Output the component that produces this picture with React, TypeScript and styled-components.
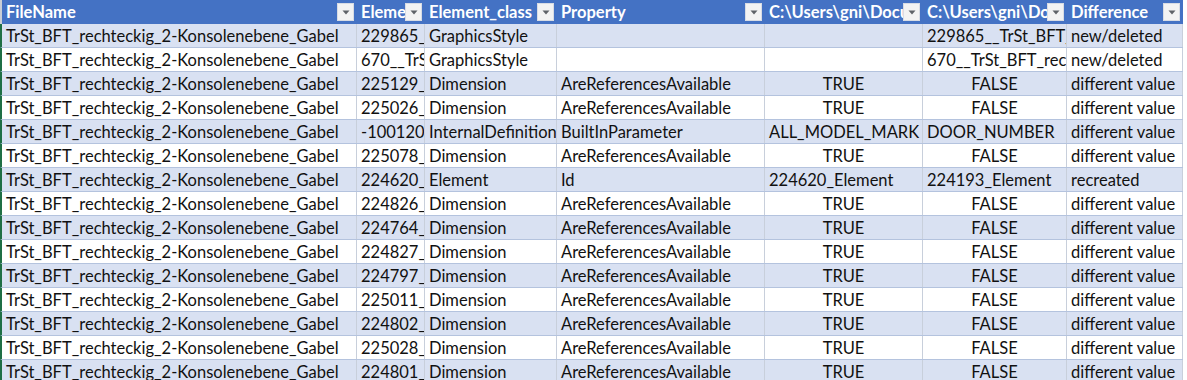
import React from "react"
import styled, { createGlobalStyle } from "styled-components"

const Global = createGlobalStyle`
  html, body { margin: 0; padding: 0; background: #ffffff; }
  body { font-family: Lato, "Open Sans", "Liberation Sans", sans-serif; overflow: hidden; }
`

const COLS = "355px 68px 132px 208px 158px 144px 116px"

const Sheet = styled.div`
  width: 1183px;
  display: flex;
  flex-direction: column;
`

const HeaderRow = styled.div`
  display: grid;
  grid-template-columns: ${COLS};
  height: 24px;
  background: #4472c4;
  border-left: 2px solid #c9ced6;
`

const HeaderCell = styled.div`
  display: flex;
  align-items: center;
  min-width: 0;
  padding: 0 3px 0 4px;
  color: #ffffff;
  font-weight: 700;
  font-size: 16.5px;
  white-space: nowrap;
`

const HeaderLabel = styled.span`
  flex: 1;
  min-width: 0;
  overflow: hidden;
`

const FilterButton = styled.span`
  flex: none;
  width: 17px;
  height: 18px;
  box-sizing: border-box;
  display: flex;
  align-items: center;
  justify-content: center;
  background: #f3f3f3;
  border: 1px solid #d8dce4;
`

const Row = styled.div<{ $band: boolean }>`
  display: grid;
  grid-template-columns: ${COLS};
  height: 24px;
  box-sizing: border-box;
  background: ${(p) => (p.$band ? "#d9e1f2" : "#ffffff")};
  border-bottom: 1px solid #b4c3de;
  border-left: 2px solid #1f6f45;
`

const Cell = styled.div<{ $align?: "left" | "center" }>`
  min-width: 0;
  overflow: hidden;
  white-space: nowrap;
  padding: 0 4px;
  line-height: 24px;
  font-size: 16.5px;
  color: #111111;
  text-align: ${(p) => p.$align ?? "left"};
  border-right: 1px solid #c8cfdb;
`

const Arrow = () => (
  <svg width="8" height="5" viewBox="0 0 8 5">
    <path d="M0.5 0.5 L7.5 0.5 L4 4.5 Z" fill="#5f6368" />
  </svg>
)

const headers = [
  "FileName",
  "Element_id",
  "Element_class",
  "Property",
  "C:\\Users\\gni\\Documents\\old.rvt",
  "C:\\Users\\gni\\Documents\\new.rvt",
  "Difference",
]

const FILE = "TrSt_BFT_rechteckig_2-Konsolenebene_Gabel"

type Rec = [string, string, string, string, string, string]

const rows: Rec[] = [
  ["229865__TrSt_BFT", "GraphicsStyle", "", "", "229865__TrSt_BFT_rechteckig", "new/deleted"],
  ["670__TrSt_BFT", "GraphicsStyle", "", "", "670__TrSt_BFT_rechteckig", "new/deleted"],
  ["225129__Dimension", "Dimension", "AreReferencesAvailable", "TRUE", "FALSE", "different value"],
  ["225026__Dimension", "Dimension", "AreReferencesAvailable", "TRUE", "FALSE", "different value"],
  ["-1001203_Internal", "InternalDefinition", "BuiltInParameter", "ALL_MODEL_MARK", "DOOR_NUMBER", "different value"],
  ["225078__Dimension", "Dimension", "AreReferencesAvailable", "TRUE", "FALSE", "different value"],
  ["224620__Element", "Element", "Id", "224620_Element", "224193_Element", "recreated"],
  ["224826__Dimension", "Dimension", "AreReferencesAvailable", "TRUE", "FALSE", "different value"],
  ["224764__Dimension", "Dimension", "AreReferencesAvailable", "TRUE", "FALSE", "different value"],
  ["224827__Dimension", "Dimension", "AreReferencesAvailable", "TRUE", "FALSE", "different value"],
  ["224797__Dimension", "Dimension", "AreReferencesAvailable", "TRUE", "FALSE", "different value"],
  ["225011__Dimension", "Dimension", "AreReferencesAvailable", "TRUE", "FALSE", "different value"],
  ["224802__Dimension", "Dimension", "AreReferencesAvailable", "TRUE", "FALSE", "different value"],
  ["225028__Dimension", "Dimension", "AreReferencesAvailable", "TRUE", "FALSE", "different value"],
  ["224801__Dimension", "Dimension", "AreReferencesAvailable", "TRUE", "FALSE", "different value"],
]

// booleans get centred like excel does
const alignOf = (v: string) => (v === "TRUE" || v === "FALSE" ? "center" : "left")

export default function App() {
  return (
    <>
      <Global />
      <Sheet>
        <HeaderRow>
          {headers.map((h) => (
            <HeaderCell key={h}>
              <HeaderLabel>{h}</HeaderLabel>
              <FilterButton>
                <Arrow />
              </FilterButton>
            </HeaderCell>
          ))}
        </HeaderRow>
        {rows.map((r, i) => (
          <Row key={i} $band={i % 2 === 0}>
            <Cell>{FILE}</Cell>
            {r.map((v, j) => (
              <Cell key={j} $align={alignOf(v)}>
                {v}
              </Cell>
            ))}
          </Row>
        ))}
      </Sheet>
    </>
  )
}
